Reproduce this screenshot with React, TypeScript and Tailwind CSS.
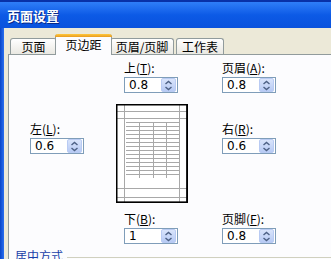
import React from "react";

const cjk = { fontFamily: '"Noto Sans CJK SC", "Noto Sans", sans-serif' };

function Spinner() {
  return (
    <div className="mr-px flex h-[14px] w-[15px] flex-col items-center justify-center rounded-[2px] border border-[#b9cbf3] bg-gradient-to-b from-[#d9e4fb] to-[#b7caf4]">
      <svg width="9" height="11" viewBox="0 0 9 11">
        <path d="M1.5 4 L4.5 1.5 L7.5 4" fill="none" stroke="#4d6185" strokeWidth="1.4" />
        <path d="M1.5 7 L4.5 9.5 L7.5 7" fill="none" stroke="#4d6185" strokeWidth="1.4" />
      </svg>
    </div>
  );
}

function Field({ label, mnemonic, value, className = "" }: { label: string; mnemonic: string; value: string; className?: string }) {
  return (
    <div className={"flex flex-col " + className}>
      <div className="h-[14px] text-[12px] leading-[14px] text-black" style={cjk}>
        {label}(<u>{mnemonic}</u>):
      </div>
      <div className="mt-[2px] flex h-[16px] w-[54px] items-center justify-between border border-[#7f9db9] bg-white">
        <span className="pl-[4px] text-[12px] leading-none text-black" style={{ fontFamily: '"DejaVu Sans", sans-serif' }}>
          {value}
        </span>
        <Spinner />
      </div>
    </div>
  );
}

function Preview() {
  const rows = Array.from({ length: 14 }, (_, i) => 63 + i * 4);
  return (
    <svg width="72" height="99" viewBox="0 0 72 99">
      <rect x="0" y="0" width="72" height="99" fill="#fff" />
      <g stroke="#a8a8a8" strokeWidth="1">
        <line x1="8.5" y1="1" x2="8.5" y2="98" />
        <line x1="63.5" y1="1" x2="63.5" y2="98" />
        <line x1="1" y1="7.5" x2="71" y2="7.5" />
        <line x1="1" y1="14.5" x2="71" y2="14.5" />
        <line x1="1" y1="84.5" x2="71" y2="84.5" />
        <line x1="1" y1="93.5" x2="71" y2="93.5" />
        {rows.map((y) => (
          <line key={y} x1="10" y1={y - 44.5} x2="63" y2={y - 44.5} />
        ))}
        <line x1="23.5" y1="19" x2="23.5" y2="74" />
        <line x1="37.5" y1="19" x2="37.5" y2="74" />
        <line x1="50.5" y1="19" x2="50.5" y2="74" />
      </g>
      <rect x="0.75" y="0.75" width="70.5" height="97.5" fill="none" stroke="#000" strokeWidth="1.5" />
      <line x1="71" y1="1" x2="71" y2="99" stroke="#000" strokeWidth="1.5" />
      <line x1="1" y1="98.5" x2="72" y2="98.5" stroke="#000" strokeWidth="1.5" />
    </svg>
  );
}

function Tab({ label, active = false, className = "" }: { label: string; active?: boolean; className?: string }) {
  if (active) {
    return (
      <div className={"relative z-10 -mx-[2px] flex h-[21px] items-start justify-center rounded-t-[3px] border-x border-[#919b9c] bg-[#fcfcfe] " + className}>
        <div className="absolute -left-px -right-px top-0 h-[3px] rounded-t-[3px] bg-gradient-to-b from-[#ffc83c] to-[#e89b1e]" />
        <span className="mt-[4px] text-[12px] leading-[14px] text-black" style={cjk}>
          {label}
        </span>
      </div>
    );
  }
  return (
    <div className={"flex h-[17px] items-center justify-center rounded-t-[3px] border border-b-0 border-[#919b9c] bg-gradient-to-b from-white to-[#e8e7e0] " + className}>
      <span className="text-[12px] leading-[14px] text-black" style={cjk}>
        {label}
      </span>
    </div>
  );
}

export default function App() {
  return (
    <div className="h-[259px] w-[331px] overflow-hidden bg-[#ece9d8]">
      {/* title bar */}
      <div className="flex h-[28px] items-center border-t-[2px] border-[#0831a8] bg-gradient-to-b from-[#2f7ef8] via-[#0c5ae6] to-[#0a52dd] pl-[7px]">
        <span className="text-[13px] font-bold leading-none text-white" style={{ ...cjk, textShadow: "1px 1px 0 #0a2a8a" }}>
          页面设置
        </span>
      </div>

      <div className="flex h-[231px]">
        <div className="w-[4px] bg-gradient-to-r from-[#0845c8] to-[#2a6ff0]" />
        <div className="flex flex-1 flex-col pl-[4px] pt-[6px]">
          {/* tabs */}
          <div className="-mb-px flex h-[21px] items-end pl-[2px]">
            <Tab label="页面" className="w-[47px]" />
            <Tab label="页边距" active className="w-[57px]" />
            <Tab label="页眉/页脚" className="w-[64px]" />
            <Tab label="工作表" className="ml-[2px] w-[48px]" />
          </div>

          {/* panel */}
          <div className="flex-1 border-l border-t border-[#919b9c] bg-[#fcfcfe]">
            <div className="grid grid-cols-[107px_72px_1fr]">
              <div />
              <Field label="上" mnemonic="T" value="0.8" className="ml-[8px] mt-[6px]" />
              <Field label="页眉" mnemonic="A" value="0.8" className="ml-[34px] mt-[6px]" />

              <Field label="左" mnemonic="L" value="0.6" className="ml-[21px] mt-[29px] self-start" />
              <div className="mt-[11px]">
                <Preview />
              </div>
              <Field label="右" mnemonic="R" value="0.6" className="ml-[34px] mt-[29px] self-start" />

              <div />
              <Field label="下" mnemonic="B" value="1" className="ml-[8px] mt-[9px]" />
              <Field label="页脚" mnemonic="F" value="0.8" className="ml-[34px] mt-[9px]" />
            </div>

            <div className="ml-[6px] mt-[5px] flex items-center">
              <span className="text-[12px] leading-[14px] text-[#1a3fa8]" style={cjk}>
                居中方式
              </span>
              <div className="ml-[4px] mt-[2px] h-px flex-1 bg-[#d0d0bf]" />
            </div>
          </div>
        </div>
      </div>
    </div>
  );
}
